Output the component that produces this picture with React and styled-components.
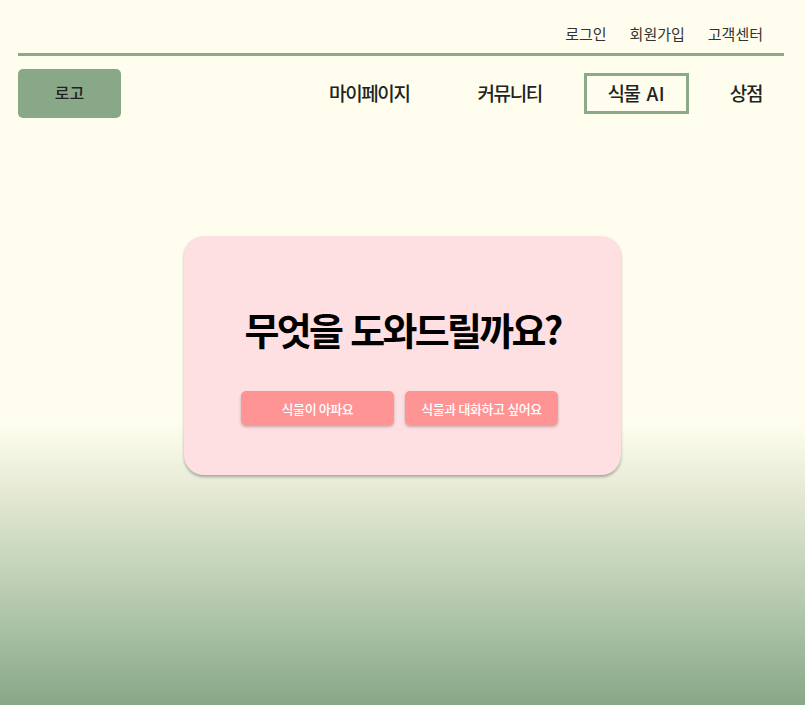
import React from "react";
import styled, { createGlobalStyle } from "styled-components";

const Global = createGlobalStyle`
  html, body { margin: 0; padding: 0; }
  body {
    font-family: "Noto Sans CJK KR", "Noto Sans", sans-serif;
    background: #fffeee;
  }
`;

const Page = styled.div`
  min-height: 705px;
  box-sizing: border-box;
  background: linear-gradient(to bottom, #fffeee 0%, #fffeee 60%, #e4e9d4 70%, #b6cab0 85%, #87a887 100%);
  padding: 0 21px 0 18px;
  display: flex;
  flex-direction: column;
`;

const TopBar = styled.div`
  display: flex;
  justify-content: flex-end;
  gap: 23px;
  padding: 22px 21px 0 0;
  height: 31px;
  border-bottom: 3px solid #8aaa88;
`;

const TopLink = styled.a`
  font-size: 15px;
  color: #333;
  text-decoration: none;
  line-height: 24px;
`;

const NavRow = styled.div`
  display: flex;
  align-items: center;
  justify-content: space-between;
  margin-top: 13px;
  padding-right: 22px;
`;

const Logo = styled.div`
  width: 103px;
  height: 49px;
  border-radius: 5px;
  background: #88a888;
  display: flex;
  align-items: center;
  justify-content: center;
  font-size: 16px;
  color: #222;
  font-weight: 500;
  padding-bottom: 4px;
  box-sizing: border-box;
`;

const Nav = styled.nav`
  display: flex;
  align-items: center;
`;

const NavItem = styled.a`
  font-size: 19px;
  font-weight: 500;
  white-space: nowrap;
  color: #222;
  text-decoration: none;
  box-sizing: border-box;
  height: 41px;
  display: flex;
  align-items: center;
  justify-content: center;
  padding-bottom: 3px;
  margin-left: ${(p) => p.$ml}px;
  width: ${(p) => (p.$active ? "105px" : "auto")};
  border: ${(p) => (p.$active ? "3px solid #8aaa88" : "none")};
`;

const Label = styled.span`
  letter-spacing: -1.4px;
  word-spacing: 4px;
`;

const Latin = styled.span`
  letter-spacing: 0.5px;
`;

const Main = styled.main`
  display: flex;
  justify-content: center;
  padding-top: 118px;
  padding-left: 3px;
`;

const Card = styled.section`
  width: 437px;
  height: 239px;
  box-sizing: border-box;
  background: #ffe0e2;
  border-radius: 20px;
  box-shadow: 0 2px 3px rgba(0, 0, 0, 0.3);
  display: flex;
  flex-direction: column;
  align-items: center;
  padding-top: 65px;
`;

const Title = styled.h1`
  margin: 0;
  font-size: 38px;
  font-weight: 700;
  color: #000;
  line-height: 56px;
  letter-spacing: -2.7px;
  word-spacing: 3px;
`;

const Buttons = styled.div`
  display: flex;
  gap: 11px;
  margin-top: 34px;
  margin-right: 6px;
`;

const Btn = styled.button`
  width: 153px;
  height: 34px;
  border: none;
  border-radius: 5px;
  background: #ff9494;
  color: #fff;
  font-family: inherit;
  font-size: 13px;
  font-weight: 500;
  letter-spacing: -0.4px;
  box-shadow: 0 2px 3px rgba(0, 0, 0, 0.25);
  cursor: pointer;
`;

export default function App() {
  return (
    <>
      <Global />
      <Page>
        <TopBar>
          <TopLink>로그인</TopLink>
          <TopLink>회원가입</TopLink>
          <TopLink>고객센터</TopLink>
        </TopBar>
        <NavRow>
          <Logo>로고</Logo>
          <Nav>
            <NavItem $ml={0}>
              <Label>마이페이지</Label>
            </NavItem>
            <NavItem $ml={68}>
              <Label>커뮤니티</Label>
            </NavItem>
            <NavItem $ml={42} $active>
              <Label>
                식물 <Latin>AI</Latin>
              </Label>
            </NavItem>
            <NavItem $ml={41}>
              <Label>상점</Label>
            </NavItem>
          </Nav>
        </NavRow>
        <Main>
          <Card>
            <Title>무엇을 도와드릴까요?</Title>
            <Buttons>
              <Btn>식물이 아파요</Btn>
              <Btn>식물과 대화하고 싶어요</Btn>
            </Buttons>
          </Card>
        </Main>
      </Page>
    </>
  );
}
